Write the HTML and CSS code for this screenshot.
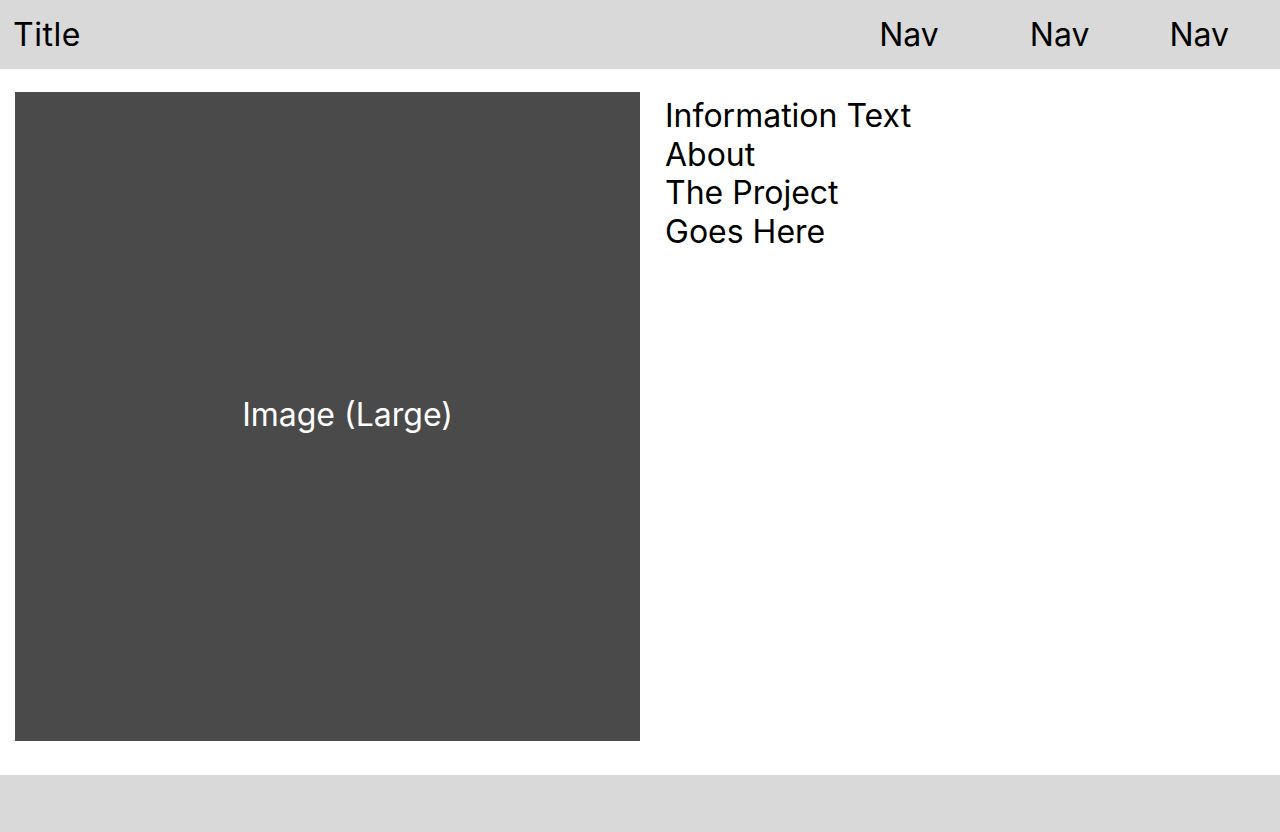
FILE: index.html
```html
<!DOCTYPE html>
<html lang="en">
<head>
<meta charset="utf-8">
<title>Title</title>
<link rel="stylesheet" href="styles.css">
</head>
<body>
<header class="topbar">
  <div class="title">Title</div>
  <nav class="nav">
    <a class="nav-item nav-1">Nav</a>
    <a class="nav-item nav-2">Nav</a>
    <a class="nav-item nav-3">Nav</a>
  </nav>
</header>
<main class="content">
  <div class="image-large"><span class="image-label">Image (Large)</span></div>
  <div class="info">
    Information Text<br>
    About<br>
    The Project<br>
    Goes Here
  </div>
</main>
<footer class="footer"></footer>
</body>
</html>
```
FILE: styles.css
```css
* { box-sizing: border-box; }
html, body {
  margin: 0;
  padding: 0;
  width: 1280px;
  height: 832px;
  overflow: hidden;
  background: #ffffff;
  font-family: Inter, "Noto Sans", sans-serif;
  font-weight: 400;
  font-size: 32px;
  color: #000000;
}
.topbar {
  height: 69px;
  background: #d9d9d9;
  display: flex;
  align-items: center;
  padding: 0 51px 0 13px;
}
.title {
  flex: 1;
  line-height: normal;
  letter-spacing: 0.5px;
}
.nav {
  display: flex;
}
.nav-item {
  color: #000;
  text-decoration: none;
  line-height: normal;
}
.nav-2 { margin-left: 91px; }
.nav-3 { margin-left: 80px; }
.content {
  display: flex;
  gap: 25px;
  padding: 23px 15px 34px;
  height: 706px;
}
.image-large {
  width: 625px;
  height: 649px;
  flex: none;
  background: #4a4a4a;
  color: #ffffff;
  display: flex;
  align-items: center;
  justify-content: center;
  padding-left: 40px;
}
.image-label {
  line-height: normal;
  margin-top: -4px;
}
.info {
  padding-top: 5px;
  line-height: 38.7px;
}
.footer {
  height: 57px;
  background: #d9d9d9;
}
```
